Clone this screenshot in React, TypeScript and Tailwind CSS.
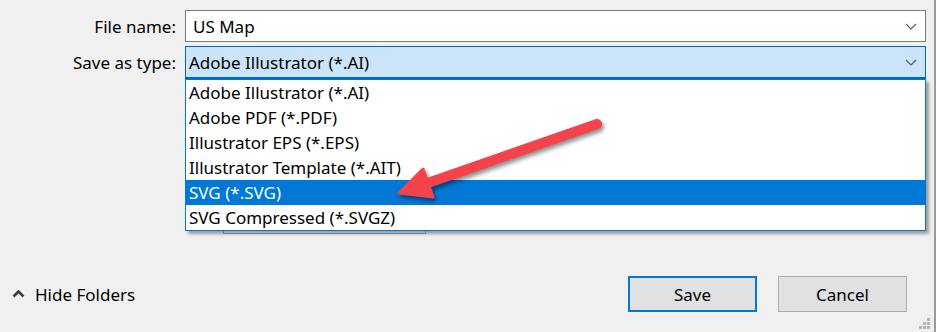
import React from "react";

const fileTypes = [
  "Adobe Illustrator (*.AI)",
  "Adobe PDF (*.PDF)",
  "Illustrator EPS (*.EPS)",
  "Illustrator Template (*.AIT)",
  "SVG (*.SVG)",
  "SVG Compressed (*.SVGZ)",
];

function Chevron() {
  return (
    <svg width="12" height="7" viewBox="0 0 12 7" className="shrink-0">
      <path d="M1 1l5 5 5-5" fill="none" stroke="#5a5a5a" strokeWidth="1.2" />
    </svg>
  );
}

export default function App() {
  const selected = 4;

  return (
    <div
      className="relative flex h-[332px] w-[936px] flex-col overflow-hidden border-r-2 border-[#9a9a9a] bg-[#f0f0f0] text-[17px] text-black"
      style={{ fontFamily: '"Noto Sans", "Open Sans", sans-serif' }}
    >
      {/* fields */}
      <div className="flex flex-col gap-1 pt-[10px] pr-[8px]">
        <div className="flex items-center">
          <label className="w-[176px] pr-0 text-right leading-none">File name:</label>
          <div className="ml-[9px] flex h-[32px] flex-1 items-center justify-between border border-[#7a7a7a] bg-white pl-[7px] pr-[8px]">
            <span className="leading-none">US Map</span>
            <Chevron />
          </div>
        </div>
        <div className="flex items-center">
          <label className="w-[176px] text-right leading-none">Save as type:</label>
          <div className="ml-[9px] flex h-[33px] flex-1 items-center justify-between border border-b-2 border-[#0067c0] bg-[#cce4f7] pl-[3px] pr-[8px]">
            <span className="leading-none">{fileTypes[0]}</span>
            <Chevron />
          </div>
        </div>
      </div>

      {/* control partly hidden behind the open list */}
      <div className="absolute left-[223px] top-[200px] h-[34px] w-[203px] border border-[#a8a8a8] bg-[#f4f4f4]" />

      {/* open list */}
      <ul className="absolute left-[185px] top-[79px] w-[741px] border border-[#0078d7] bg-white shadow-[3px_3px_3px_rgba(0,0,0,0.35)]">
        {fileTypes.map((t, i) => (
          <li
            key={t}
            className={
              "flex h-[25px] items-center pl-[3px] leading-none " +
              (i === selected ? "bg-[#0078d7] text-white" : "")
            }
          >
            {t}
          </li>
        ))}
      </ul>

      {/* bottom bar */}
      <div className="mt-auto flex items-center justify-between pb-[20px] pl-[12px] pr-[27px]">
        <button className="flex items-center gap-[10px]">
          <svg width="13" height="8" viewBox="0 0 13 8">
            <path d="M1.5 6.5l5-5 5 5" fill="none" stroke="#3c3c3c" strokeWidth="2.6" />
          </svg>
          <span className="leading-none">Hide Folders</span>
        </button>
        <div className="flex gap-[21px]">
          <button className="h-[36px] w-[129px] border-2 border-[#0078d7] bg-[#e1e1e1] leading-none">
            Save
          </button>
          <button className="h-[36px] w-[129px] border border-[#adadad] bg-[#e1e1e1] leading-none">
            Cancel
          </button>
        </div>
      </div>

      {/* size grip */}
      <svg className="absolute bottom-[2px] right-[3px]" width="12" height="12" viewBox="0 0 12 12">
        <g fill="#b4b4b4">
          <rect x="8" y="0" width="3" height="3" />
          <rect x="4" y="4" width="3" height="3" />
          <rect x="8" y="4" width="3" height="3" />
          <rect x="0" y="8" width="3" height="3" />
          <rect x="4" y="8" width="3" height="3" />
          <rect x="8" y="8" width="3" height="3" />
        </g>
      </svg>

      {/* annotation arrow */}
      <svg
        className="pointer-events-none absolute left-0 top-0"
        width="936"
        height="332"
        style={{ filter: "drop-shadow(2px 3px 2px rgba(0,0,0,0.45))" }}
      >
        <line x1="597" y1="124" x2="422" y2="185" stroke="#f4434b" strokeWidth="10" strokeLinecap="round" />
        <polygon
          points="399,193 423,169 433,197"
          fill="#f4434b"
          stroke="#f4434b"
          strokeWidth="3"
          strokeLinejoin="round"
        />
      </svg>
    </div>
  );
}
